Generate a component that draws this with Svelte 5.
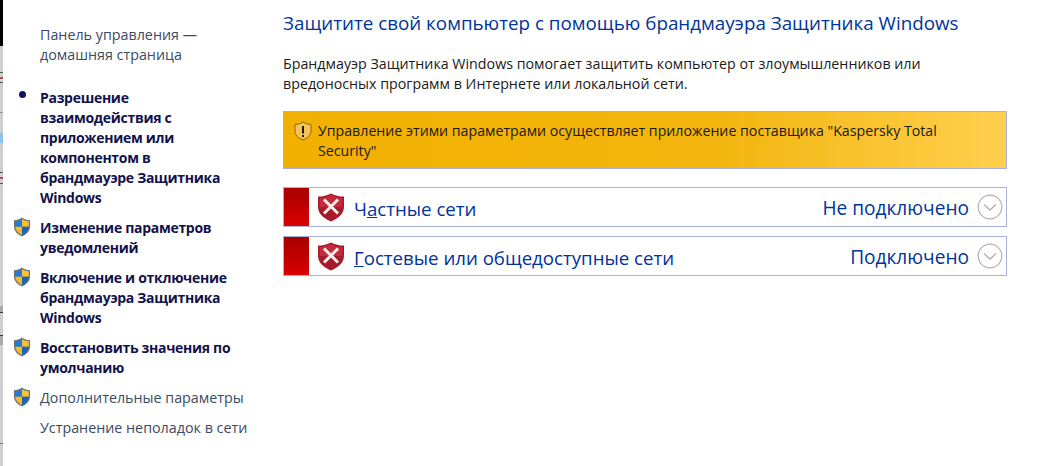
<script>
  const tasks = [
    { label: ['Разрешение', 'взаимодействия с', 'приложением или', 'компонентом в', 'брандмауэре Защитника', 'Windows'], mark: 'dot', bold: true },
    { label: ['Изменение параметров', 'уведомлений'], mark: 'shield', bold: true },
    { label: ['Включение и отключение', 'брандмауэра Защитника', 'Windows'], mark: 'shield', bold: true },
    { label: ['Восстановить значения по', 'умолчанию'], mark: 'shield', bold: true },
    { label: ['Дополнительные параметры'], mark: 'shield', bold: false },
    { label: ['Устранение неполадок в сети'], mark: '', bold: false }
  ];

  const networks = [
    { before: 'Ч', key: 'а', after: 'стные сети', status: 'Не подключено' },
    { before: '', key: 'Г', after: 'остевые или общедоступные сети', status: 'Подключено' }
  ];
</script>

<div class="page">
  <div class="edge"></div>

  <aside class="side">
    <p class="home">Панель управления —<br />домашняя страница</p>
    <ul class="tasks">
      {#each tasks as task}
        <li class="task" class:bold={task.bold}>
          <span class="mark">
            {#if task.mark === 'dot'}
              <span class="dot"></span>
            {:else if task.mark === 'shield'}
              <svg width="18" height="20" viewBox="0 0 18 20">
                <path d="M9 .6 C6.8 2.4 4 3.2 1 3.2 V9.5 C1 14 4.4 17.4 9 19.4 C13.6 17.4 17 14 17 9.5 V3.2 C14 3.2 11.2 2.4 9 .6Z" fill="#6b6f78" />
                <path d="M9 2 C7 3.4 4.6 4.2 2.2 4.3 V9.8 H9Z" fill="#1f7fd6" />
                <path d="M9 2 C11 3.4 13.4 4.2 15.8 4.3 V9.8 H9Z" fill="#fbc02d" />
                <path d="M2.2 9.8 H9 V18 C5 16.2 2.4 13.4 2.2 9.8Z" fill="#fbb829" />
                <path d="M15.8 9.8 H9 V18 C13 16.2 15.6 13.4 15.8 9.8Z" fill="#1667b8" />
              </svg>
            {/if}
          </span>
          <span class="task-text">
            {#each task.label as line, i}{line}{#if i < task.label.length - 1}<br />{/if}{/each}
          </span>
        </li>
      {/each}
    </ul>
  </aside>

  <main class="content">
    <h1>Защитите свой компьютер с помощью брандмауэра Защитника Windows</h1>
    <p class="intro">Брандмауэр Защитника Windows помогает защитить компьютер от злоумышленников или<br />вредоносных программ в Интернете или локальной сети.</p>

    <div class="notice">
      <svg class="notice-icon" width="20" height="20" viewBox="0 0 20 20">
        <path d="M10 1 C8 2.6 5 3.4 2 3.4 V10 C2 14 5 17 10 19 C15 17 18 14 18 10 V3.4 C15 3.4 12 2.6 10 1Z" fill="#f6c453" stroke="#8a6414" stroke-width="1" />
        <rect x="9" y="5" width="2" height="7.5" fill="#1c1c1c" />
        <rect x="9" y="14" width="2" height="2" fill="#1c1c1c" />
      </svg>
      <p>Управление этими параметрами осуществляет приложение поставщика "Kaspersky Total<br />Security"</p>
    </div>

    {#each networks as net}
      <div class="network">
        <div class="flag"></div>
        <svg class="net-shield" width="28" height="29" viewBox="0 0 28 29">
          <path d="M14 .5 C10.5 2.6 5.5 3.6 1 3.6 V14 C1 20.5 6.5 25.4 14 28.5 C21.5 25.4 27 20.5 27 14 V3.6 C22.5 3.6 17.5 2.6 14 .5Z" fill="#a61b2b" />
          <path d="M14 2 C10.8 4 6.5 5 2.6 5 V14 H25.4 V5 C21.5 5 17.2 4 14 2Z" fill="#c42b3a" />
          <path d="M7 6.5 L21 20.5 M21 6.5 L7 20.5" stroke="#f8eeee" stroke-width="3" />
        </svg>
        <span class="net-name">{net.before}<u>{net.key}</u>{net.after}</span>
        <span class="net-status">{net.status}</span>
        <svg class="chevron" width="26" height="26" viewBox="0 0 26 26">
          <circle cx="13" cy="13" r="11.8" fill="#fff" stroke="#b0b0b0" stroke-width="1.2" />
          <path d="M7 10.5 L13 16 L19 10.5" fill="none" stroke="#b0b0b0" stroke-width="1.3" />
        </svg>
      </div>
    {/each}
  </main>
</div>

<style>
  :global(body) {
    background: #fff;
    overflow: hidden;
  }

  .page {
    display: flex;
    width: 1043px;
    height: 466px;
    font-family: "Open Sans", "Noto Sans", sans-serif;
    background: #fff;
  }

  /* scraps of the window behind, one hard-stop strip */
  .edge {
    width: 3px;
    flex: none;
    background: linear-gradient(
      180deg,
      #000 0 46px,
      #cfcfcf 46px 72px,
      #555 72px 73px,
      #cfcfcf 73px 77px,
      #a55 77px 79px,
      #cfcfcf 79px 82px,
      #555 82px 83px,
      #cfcfcf 83px 112px,
      #999 112px 113px,
      #cfcfcf 113px 133px,
      #8cc4f0 133px 143px,
      #cfcfcf 143px 172px,
      #555 172px 173px,
      #cfcfcf 173px 177px,
      #a55 177px 179px,
      #cfcfcf 179px 183px,
      #555 183px 184px,
      #cfcfcf 184px 306px,
      #aaa 306px 312px,
      #333 312px 313px,
      #cfcfcf 313px 335px,
      #333 335px 336px,
      #aaa 336px 345px,
      #cfcfcf 345px 443px,
      #777 443px 444px,
      #cfcfcf 444px 466px
    );
  }

  .side {
    width: 280px;
    flex: none;
    box-sizing: border-box;
    padding: 25px 0 0 37px;
    font-size: 14.3px;
    line-height: 20px;
    color: #3c4a60;
    white-space: nowrap;
  }

  .home {
    margin: 0 0 23px;
  }

  .tasks {
    list-style: none;
    margin: 0;
    padding: 0;
  }

  .task {
    position: relative;
    margin-bottom: 10px;
  }

  .task.bold {
    font-size: 14px;
    font-weight: 700;
    letter-spacing: -0.3px;
    color: #12124a;
  }

  .mark {
    position: absolute;
    left: -27px;
    top: -1px;
  }

  .dot {
    display: block;
    width: 7px;
    height: 7px;
    margin: 4px 0 0 6px;
    border-radius: 50%;
    background: #14145a;
  }

  .content {
    flex: 1;
    padding: 11px 36px 0 0;
  }

  h1 {
    margin: 0 0 19px;
    font-size: 18.8px;
    line-height: 24px;
    font-weight: 400;
    white-space: nowrap;
    color: #003399;
  }

  .intro {
    margin: 0 0 17px;
    font-size: 14.25px;
    line-height: 20px;
    color: #1a1a1a;
  }

  .notice {
    display: flex;
    gap: 5px;
    box-sizing: border-box;
    height: 58px;
    padding: 9px 9px;
    border: 1px solid #a9b1dc;
    background: linear-gradient(90deg, #f2b100 0%, #f3b50e 60%, #ffd04e 100%);
  }

  .notice p {
    margin: 0;
    font-size: 14.2px;
    line-height: 20px;
    white-space: nowrap;
    color: #1a1a1a;
  }

  .network {
    display: flex;
    align-items: center;
    box-sizing: border-box;
    height: 40px;
    margin-top: 18px;
    border: 1px solid #a9b1dc;
  }

  .network + .network {
    margin-top: 9px;
  }

  .flag {
    width: 25px;
    height: 38px;
    background: linear-gradient(180deg, #a80000, #d80000);
  }

  .net-shield {
    margin-left: 8px;
  }

  .net-name {
    margin-left: 9px;
    padding-top: 2px;
    font-size: 18.65px;
    color: #003399;
  }

  .net-status {
    margin-left: auto;
    padding-top: 2px;
    font-size: 19.1px;
    color: #003399;
  }

  .chevron {
    margin: -1px 3px 0 8px;
  }
</style>
